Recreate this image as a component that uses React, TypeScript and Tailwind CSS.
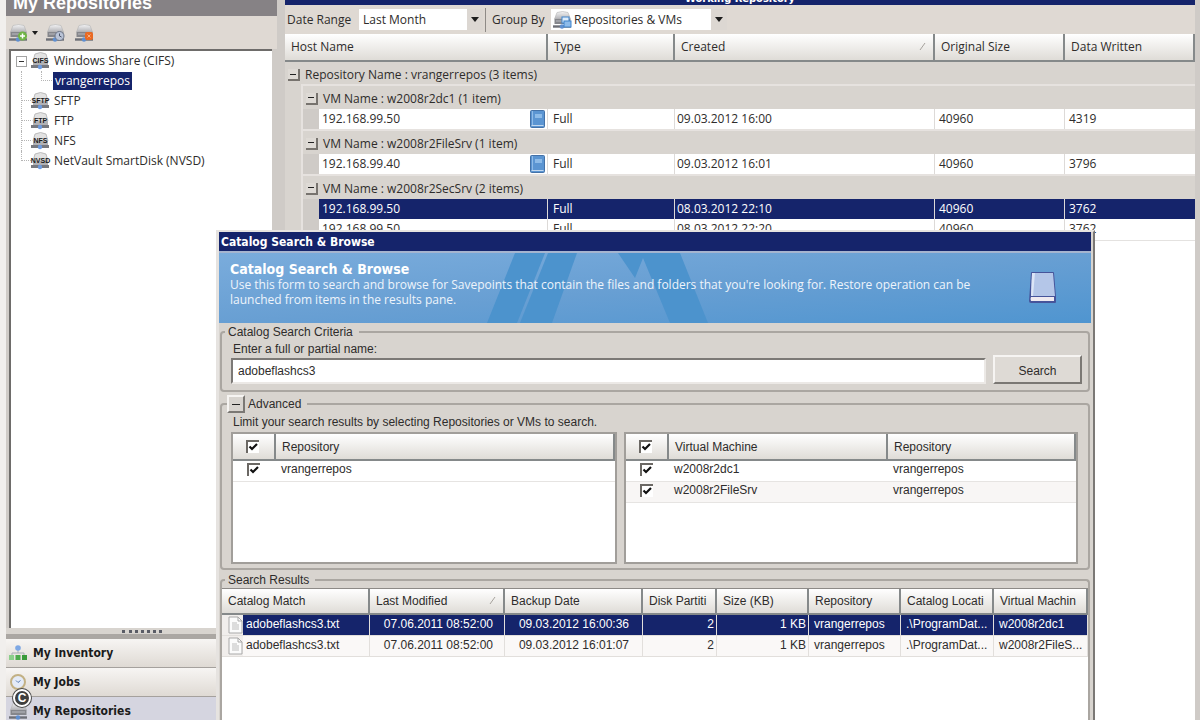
import { Fragment, useState } from "react";
import type { ReactNode } from "react";

/* ─────────────────────────────── data ─── */

const SHARES = [
  { tag: "SFTP", label: "SFTP" },
  { tag: "FTP", label: "FTP" },
  { tag: "NFS", label: "NFS" },
  { tag: "NVSD", label: "NetVault SmartDisk (NVSD)" },
];

const VM_GROUPS = [
  {
    title: "VM Name : w2008r2dc1 (1 item)",
    rows: [{ host: "192.168.99.50", book: true, created: "09.03.2012 16:00", size: "40960", written: "4319" }],
  },
  {
    title: "VM Name : w2008r2FileSrv (1 item)",
    rows: [{ host: "192.168.99.40", book: true, created: "09.03.2012 16:01", size: "40960", written: "3796" }],
  },
  {
    title: "VM Name : w2008r2SecSrv (2 items)",
    rows: [
      { host: "192.168.99.50", selected: true, created: "08.03.2012 22:10", size: "40960", written: "3762" },
      { host: "192.168.99.50", created: "08.03.2012 22:20", size: "40960", written: "3762" },
    ],
  },
];

const RESULTS = [
  { file: "adobeflashcs3.txt", modified: "07.06.2011 08:52:00", backup: "09.03.2012 16:00:36", vm: "w2008r2dc1" },
  { file: "adobeflashcs3.txt", modified: "07.06.2011 08:52:00", backup: "09.03.2012 16:01:07", vm: "w2008r2FileS..." },
];

/* ─────────────────────────────── icons ─── */

const Drive = ({ children }: { children?: ReactNode }) => (
  <svg viewBox="0 0 19 18" className="h-[18px] w-[19px] shrink-0">
    <defs>
      <linearGradient id="drive" x1="0" y1="0" x2="0" y2="1">
        <stop offset="0" stopColor="#f4f4f5" />
        <stop offset="1" stopColor="#b2b2b6" />
      </linearGradient>
    </defs>
    <path d="M4 1.5 Q9.5 -0.5 15 1.5 L17.5 8 H1.5 Z" fill="url(#drive)" stroke="#b4b3b3" strokeWidth="0.6" />
    <path d="M1.5 8 H17.5 V13 H1.5 Z" fill="#85868b" />
    <path d="M3 10 H16" stroke="#b9bac0" />
    <path d="M0 15.5 H18" stroke="#6d6f76" strokeWidth="2.4" />
    <circle cx="9" cy="15.5" r="2.2" fill="#5f8fd0" />
    {children}
  </svg>
);

const AddBadge = () => (
  <g>
    <circle cx="13.5" cy="12" r="4.5" fill="#6fb446" />
    <path d="M13.5 9.5 V14.5 M11 12 H16" stroke="#fff" strokeWidth="1.5" />
  </g>
);

const ClockBadge = () => (
  <g>
    <circle cx="13.5" cy="12" r="4.5" fill="#b9c3d6" stroke="#6d7688" />
    <path d="M13.5 9.5 V12 L15.5 13" stroke="#4d566b" fill="none" />
  </g>
);

const RemoveBadge = () => (
  <g>
    <rect x="10" y="8" width="8" height="8" rx="2" fill="#ea6a23" />
    <path d="M12.5 10.5 L15.5 13.5 M15.5 10.5 L12.5 13.5" stroke="#f9b083" />
  </g>
);

const StackBadge = () => (
  <g>
    <rect x="9" y="6" width="7" height="6" fill="#dcecfb" stroke="#3f83cc" />
    <rect x="11" y="10" width="7" height="6" fill="#8dbbea" stroke="#3f83cc" />
  </g>
);

const ShareIcon = ({ tag }: { tag: string }) => (
  <svg viewBox="0 0 19 18" className="h-[18px] w-[19px] shrink-0 overflow-visible">
    <path d="M4 2 Q9.5 -1 15 2 L17 9 H2 Z" fill="#e2e2e2" stroke="#b0b0b0" strokeWidth="0.8" />
    <path d="M2 9 H17 V13 H2 Z" fill="#b1b1b4" />
    <path d="M0 14.5 H18" stroke="#77797f" strokeWidth="3" />
    <circle cx="9" cy="15" r="2.2" fill="#6d9be0" />
    <text x="9.5" y="10.5" textAnchor="middle" fontSize="7" fontWeight="bold" fontFamily="Liberation Sans, sans-serif" fill="#1a1a1a">
      {tag}
    </text>
  </svg>
);

const SmallBook = () => (
  <svg viewBox="0 0 15 18" className="h-[18px] w-[15px] shrink-0">
    <rect x="0.5" y="0.5" width="14" height="17" rx="1" fill="#5b95d2" stroke="#4472a8" />
    <path d="M2.5 1 V15" stroke="#8fbbe8" />
    <rect x="5" y="4" width="7" height="4" fill="#8dbbe8" />
    <path d="M1.5 15.5 H13.5" stroke="#c3d8ee" />
  </svg>
);

const BigBook = () => (
  <svg viewBox="0 0 30 34" className="h-[34px] w-[30px]">
    <path d="M3 2 Q3 1 4 1 H25 Q26 1 26 2 L28 26 V31 Q28 32 27 32 H3 Q1 32 1 30 Z" fill="#46549a" />
    <path d="M4 2 H25 L27 25 H3 Z" fill="#b4c6e8" />
    <path d="M4 2 H7 L5 25 H3 Z" fill="#dce5f6" />
    <path d="M3 26 H26 V30 H3 Q2 28 3 26 Z" fill="#efeaf0" />
  </svg>
);

const FileIcon = () => (
  <svg viewBox="0 0 15 18" className="h-[18px] w-[15px]">
    <path d="M1 1 H10 L14 5 V17 H1 Z" fill="#fbfbfb" stroke="#a9a9a9" />
    <path d="M10 1 V5 H14" fill="none" stroke="#a9a9a9" />
    <path d="M4 7 H9 M4 9 H11 M4 11 H11 M4 13 H11" stroke="#bdbdbd" />
  </svg>
);

const InventoryIcon = () => (
  <svg viewBox="0 0 18 18" className="h-[18px] w-[18px]">
    <path d="M9 4 V9 M3 12 V9 H15 V12" stroke="#a8adb5" fill="none" />
    <circle cx="9" cy="4" r="2.8" fill="#7ea8e4" />
    <rect x="0" y="11" width="5" height="5" fill="#8bcf8b" />
    <rect x="6.5" y="11" width="5" height="5" fill="#4dab4d" />
    <rect x="13" y="11" width="5" height="5" fill="#3a9b3a" />
  </svg>
);

const JobsIcon = () => (
  <svg viewBox="0 0 18 18" className="h-[18px] w-[18px]">
    <circle cx="9" cy="9" r="7" fill="#e4ebf7" stroke="#c3b184" strokeWidth="2" />
    <path d="M7 7.5 L9 9.5 L11.5 7.5" stroke="#5b7fb5" fill="none" />
  </svg>
);

const Arrow = () => (
  <svg viewBox="0 0 8 5" className="h-[5px] w-2">
    <path d="M0 0 H8 L4 5 Z" fill="#1c1c1c" />
  </svg>
);

const SmallArrow = () => (
  <svg viewBox="0 0 6 4" className="h-1 w-[6px]">
    <path d="M0 0 H6 L3 4 Z" fill="#1c1c1c" />
  </svg>
);

const SortMark = () => (
  <svg viewBox="0 0 8 8" className="h-2 w-2 shrink-0">
    <path d="M1 7 L6 0" stroke="#a6a29c" />
  </svg>
);

/* ─────────────────────────────── small parts ─── */

const Collapse = ({ label }: { label: string }) => (
  <button
    aria-label={label}
    className="flex h-3 w-3 shrink-0 items-center justify-center border-r-2 border-b-2 border-[#77736e] bg-[#dedad5]"
  >
    <span className="h-px w-[6px] bg-[#222]" />
  </button>
);

const Check = ({ label }: { label: string }) => {
  const [on, setOn] = useState(true);
  return (
    <label className="relative block h-[13px] w-[13px]">
      <input
        type="checkbox"
        aria-label={label}
        checked={on}
        onChange={() => setOn(!on)}
        className="block h-[13px] w-[13px] appearance-none border-t-2 border-l-2 border-[#6b6864] bg-white"
      />
      {on && (
        <svg viewBox="0 0 13 13" className="pointer-events-none absolute inset-0">
          <path d="M3.5 6.5 L6 9 L11 4" stroke="#111" strokeWidth="2.2" fill="none" />
        </svg>
      )}
    </label>
  );
};

const Th = ({ children, span, sort, className = "px-[6px]" }: { children: ReactNode; span?: number; sort?: boolean; className?: string }) => (
  <th
    colSpan={span}
    className={`overflow-hidden border-r-2 border-b-2 border-[#85898a] bg-linear-to-b from-white to-[#dfdcd7] text-left font-normal whitespace-nowrap ${className}`}
  >
    <div className="flex items-center justify-between">
      <span>{children}</span>
      {sort && <SortMark />}
    </div>
  </th>
);

/* ─────────────────────────────── sidebar ─── */

const Sidebar = () => (
  <aside className="flex w-[277px] shrink-0 flex-col border-l-[6px] border-[#f1efed]">
    <header className="flex h-4 shrink-0 items-end overflow-hidden bg-[#868285] pb-1 pl-[7px]">
      <h1 className="font-['Liberation_Sans',sans-serif] text-[18px] leading-[18px] font-bold text-white">My Repositories</h1>
    </header>

    <div className="flex h-[33px] shrink-0 items-center bg-[#dfd9d3] pl-[3px]">
      <button aria-label="Add repository" className="flex items-center gap-1">
        <Drive><AddBadge /></Drive>
        <SmallArrow />
      </button>
      <button aria-label="Repository history" className="ml-2">
        <Drive><ClockBadge /></Drive>
      </button>
      <button aria-label="Remove repository" className="ml-[10px]">
        <Drive><RemoveBadge /></Drive>
      </button>
    </div>

    <ul className="mr-[5px] ml-[3px] flex-1 border-t-2 border-l-2 border-[#6e6c6a] bg-white">
      <li>
        <div className="flex h-5 items-center">
          <button
            aria-label="Collapse Windows Share"
            className="ml-[5px] flex h-[11px] w-[11px] items-center justify-center border border-[#a3a3a3] bg-white"
          >
            <span className="h-px w-[5px] bg-[#333]" />
          </button>
          <span className="ml-1"><ShareIcon tag="CIFS" /></span>
          <span className="ml-1">Windows Share (CIFS)</span>
        </div>
        <ul>
          <li className="flex h-5 items-center">
            <span className="ml-[10px] h-5 w-5 border-l border-dotted border-[#b5b5b5]" />
            <span className="mb-[10px] h-[10px] w-[11px] border-b border-l border-dotted border-[#b5b5b5]" />
            <a href="#vrangerrepos" className="ml-[1px] bg-[#15246b] px-[2px] leading-[18px] text-white">vrangerrepos</a>
          </li>
        </ul>
      </li>
      {SHARES.map((s, i) => (
        <li key={s.tag} className="flex h-5 items-start">
          <span className={`ml-[10px] border-l border-dotted border-[#b5b5b5] ${i === SHARES.length - 1 ? "h-[10px]" : "h-5"}`} />
          <span className="h-[10px] w-[9px] border-b border-dotted border-[#b5b5b5]" />
          <span className="flex h-5 items-center gap-1">
            <ShareIcon tag={s.tag} />
            <span>{s.label}</span>
          </span>
        </li>
      ))}
    </ul>

    <div className="flex h-[11px] shrink-0 items-center justify-center border-b-[5px] border-[#aba7a3] bg-[#d8d4cf]">
      <span className="w-10 border-t-[3px] border-dotted border-[#5a5c66]" />
    </div>

    <nav className="h-[81px] shrink-0 overflow-hidden font-bold text-[#1b1b1b]">
      <NavItem label="My Inventory" icon={<InventoryIcon />} />
      <NavItem label="My Jobs" icon={<JobsIcon />} />
      <NavItem label="My Repositories" icon={<Drive />} active />
    </nav>
  </aside>
);

const NavItem = ({ label, icon, active = false }: { label: string; icon: ReactNode; active?: boolean }) => (
  <a
    href="#nav"
    className={`flex h-[29px] items-center border-b border-[#a5a19d] pl-[3px] font-['DejaVu_Sans_Condensed','DejaVu_Sans',sans-serif] ${
      active ? "bg-[#d5d5e0]" : "bg-linear-to-b from-[#f7f5f3] to-[#dfdad4]"
    }`}
  >
    <span className="flex w-6 shrink-0">{icon}</span>
    {label}
  </a>
);

/* ─────────────────────────────── repository grid ─── */

const RepositoryGrid = () => (
  <main className="mr-[5px] ml-2 flex min-w-0 flex-1 flex-col bg-white">
    <header className="flex h-[5px] shrink-0 items-end justify-center overflow-hidden bg-[#15246b]">
      <h2 className="font-['DejaVu_Sans_Condensed','DejaVu_Sans',sans-serif] text-[11px] leading-3 font-bold text-white">
        Working Repository
      </h2>
    </header>

    <div className="flex h-[29px] shrink-0 items-center bg-[#dfd9d3] pl-[2px]">
      <label htmlFor="range" className="w-[72px]">Date Range</label>
      <div className="relative flex h-[21px] w-[124px] items-center bg-white">
        <select id="range" className="h-full w-full appearance-none pl-1">
          <option>Last Month</option>
        </select>
        <span className="pointer-events-none absolute inset-y-0 right-0 flex w-4 items-center justify-center bg-[#dcd7d2]">
          <Arrow />
        </span>
      </div>
      <span className="mx-[2px] h-6 w-px bg-[#8e8a86]" />
      <label htmlFor="group" className="ml-1 w-[59px]">Group By</label>
      <div className="relative flex h-[21px] w-[176px] items-center bg-white pl-[2px]">
        <Drive><StackBadge /></Drive>
        <select id="group" className="h-full w-full appearance-none pl-[2px]">
          <option>Repositories &amp; VMs</option>
        </select>
        <span className="pointer-events-none absolute inset-y-0 right-0 flex w-4 items-center justify-center bg-[#dcd7d2]">
          <Arrow />
        </span>
      </div>
    </div>

    <table className="w-full table-fixed border-separate border-spacing-0">
      <colgroup>
        <col className="w-[18px]" />
        <col className="w-4" />
        <col />
        <col className="w-[127px]" />
        <col className="w-[260px]" />
        <col className="w-[130px]" />
        <col className="w-[130px]" />
      </colgroup>
      <thead>
        <tr className="h-7">
          <Th span={3}>Host Name</Th>
          <Th>Type</Th>
          <Th sort>Created</Th>
          <Th>Original Size</Th>
          <Th>Data Written</Th>
        </tr>
      </thead>
      <tbody>
        <tr className="h-[22px] bg-[#d8d4cf]">
          <td colSpan={7} className="pt-1 pl-[3px]">
            <div className="flex items-center gap-[5px]">
              <Collapse label="Collapse repository" />
              Repository Name : vrangerrepos (3 items)
            </div>
          </td>
        </tr>
        {VM_GROUPS.map((g) => (
          <Fragment key={g.title}>
            <tr className="h-[25px] bg-[#d8d4cf]">
              <td className="border-r-2 border-[#e6e2df]" />
              <td colSpan={6} className="border-t-2 border-[#e6e2df] pt-[2px] pl-[3px]">
                <div className="flex items-center gap-[5px]">
                  <Collapse label="Collapse VM" />
                  {g.title}
                </div>
              </td>
            </tr>
            {g.rows.map((r) => (
              <tr key={r.created} className={`h-5 ${r.selected ? "bg-[#15246b] text-white" : "bg-white"}`}>
                <td className="border-r-2 border-[#e6e2df] bg-[#d8d4cf]" />
                <td className="bg-[#cfcbc7]" />
                <td className="border-r border-[#dddad8] pl-[3px]">
                  <div className="flex items-center justify-between pr-[2px]">
                    {r.host}
                    {r.book && <SmallBook />}
                  </div>
                </td>
                <td className="border-r border-[#dddad8] pl-[5px]">Full</td>
                <td className="border-r border-[#dddad8] pl-[2px]">{r.created}</td>
                <td className="border-r border-[#dddad8] pl-1">{r.size}</td>
                <td className="pl-1">{r.written}</td>
              </tr>
            ))}
          </Fragment>
        ))}
        <tr className="h-[2px]">
          <td colSpan={7} className="border-b border-[#e4e2e0]" />
        </tr>
      </tbody>
    </table>
  </main>
);

/* ─────────────────────────────── dialog ─── */

const Banner = () => (
  <div className="relative h-[72px] shrink-0 overflow-hidden border-t-2 border-[#a5b4cf] bg-linear-to-br from-[#7aacdc] via-[#689fd3] to-[#4f95d0]">
    <svg viewBox="0 0 230 70" className="absolute top-0 left-[268px] h-[70px] w-[230px]">
      <path d="M28 0 H58 L30 70 H0 Z" fill="#4c93cd" />
      <path d="M61 0 H90 L65 70 H33 Z" fill="#4c93cd" />
      <path d="M131 0 H193 L221 70 H183 L156 5 L148 25 Z" fill="#4c93cd" />
    </svg>
    <div className="relative flex h-full items-start justify-between pt-2 pr-[33px] pl-[11px] text-white">
      <div className="max-w-[760px]">
        <h3 className="font-['DejaVu_Sans_Condensed','DejaVu_Sans',sans-serif] text-[14px] leading-4 font-bold">Catalog Search &amp; Browse</h3>
        <p className="leading-[15px] text-[#eef4fb]">
          Use this form to search and browse for Savepoints that contain the files and folders that you're looking for. Restore operation can be
          <br />
          launched from items in the results pane.
        </p>
      </div>
      <span className="mt-[10px]"><BigBook /></span>
    </div>
  </div>
);

const CatalogDialog = () => {
  const [name, setName] = useState("adobeflashcs3");

  return (
    <section
      role="dialog"
      aria-label="Catalog Search & Browse"
      className="absolute top-[230px] right-[105px] bottom-0 left-[216px] flex flex-col overflow-hidden border-t-2 border-r-2 border-l-[3px] border-t-[#e6e3e0] border-r-[#7b7875] border-l-[#e6e3e0] bg-[#d8d4cf] pr-[2px]"
    >
      <header className="flex h-[19px] shrink-0 items-center bg-[#15246b] pl-[2px]">
        <h2 className="font-['DejaVu_Sans_Condensed','DejaVu_Sans',sans-serif] text-[12px] font-bold text-white">Catalog Search &amp; Browse</h2>
      </header>
      <Banner />

      <div className="mx-px flex flex-1 flex-col pt-px font-['Liberation_Sans',sans-serif] text-[12px] leading-4">
        <fieldset className="h-[68px] min-w-0 shrink-0 rounded-sm border-2 border-[#aaa6a1]">
          <legend className="ml-[3px] pr-[6px] pl-[3px]">Catalog Search Criteria</legend>
          <div className="flex items-end gap-[7px] pr-[6px] pl-[9px]">
            <div className="flex-1">
              <label htmlFor="name" className="block pl-[2px] leading-[18px]">Enter a full or partial name:</label>
              <input
                id="name"
                value={name}
                onChange={(e) => setName(e.target.value)}
                className="block h-[26px] w-full border-2 border-t-[#7c7976] border-r-[#ece9e6] border-b-[#ece9e6] border-l-[#7c7976] bg-white pl-[5px]"
              />
            </div>
            <button className="h-[29px] w-[89px] border-2 border-t-[#f6f4f2] border-r-[#7b7874] border-b-[#7b7874] border-l-[#f6f4f2] bg-[#dedad5] pt-[3px]">
              Search
            </button>
          </div>
        </fieldset>

        <fieldset className="mt-[3px] h-[175px] min-w-0 shrink-0 rounded-sm border-2 border-[#aaa6a1]">
          <legend className="ml-[5px] flex h-[18px] items-center gap-[3px] pr-[6px]">
            <button
              aria-label="Hide advanced options"
              className="flex h-[18px] w-[18px] items-center justify-center border-2 border-t-[#f6f4f2] border-r-[#7b7874] border-b-[#7b7874] border-l-[#f6f4f2]"
            >
              <span className="h-px w-2 bg-[#222]" />
            </button>
            Advanced
          </legend>
          <div className="pr-[10px] pl-[9px]">
            <p className="pl-[2px] leading-[19px]">Limit your search results by selecting Repositories or VMs to search.</p>
            <div className="grid h-[132px] grid-cols-[386fr_454fr] gap-[7px]">
              <div className="border-2 border-[#a19e9a] bg-white">
                <table className="w-full table-fixed border-separate border-spacing-0">
                  <colgroup>
                    <col className="w-[43px]" />
                    <col />
                  </colgroup>
                  <thead>
                    <tr className="h-[27px]">
                      <Th className="pl-[13px]"><Check label="All repositories" /></Th>
                      <Th>Repository</Th>
                    </tr>
                  </thead>
                  <tbody>
                    <tr className="h-[21px]">
                      <td className="border-b border-[#e6e4e2] pb-1 pl-[14px]"><Check label="vrangerrepos" /></td>
                      <td className="border-b border-[#e6e4e2] pb-1 pl-[5px]">vrangerrepos</td>
                    </tr>
                  </tbody>
                </table>
              </div>
              <div className="border-2 border-[#a19e9a] bg-white">
                <table className="w-full table-fixed border-separate border-spacing-0">
                  <colgroup>
                    <col className="w-[43px]" />
                    <col />
                    <col className="w-[188px]" />
                  </colgroup>
                  <thead>
                    <tr className="h-[27px]">
                      <Th className="pl-[13px]"><Check label="All virtual machines" /></Th>
                      <Th>Virtual Machine</Th>
                      <Th>Repository</Th>
                    </tr>
                  </thead>
                  <tbody>
                    {["w2008r2dc1", "w2008r2FileSrv"].map((vm) => (
                      <tr key={vm} className="h-[21px] even:bg-[#f8f6f5]">
                        <td className="border-b border-[#e6e4e2] pb-1 pl-[14px]"><Check label={vm} /></td>
                        <td className="border-b border-[#e6e4e2] pb-1 pl-[5px]">{vm}</td>
                        <td className="border-b border-[#e6e4e2] pb-1 pl-[5px]">vrangerrepos</td>
                      </tr>
                    ))}
                  </tbody>
                </table>
              </div>
            </div>
          </div>
        </fieldset>

        <fieldset className="mt-[2px] min-w-0 flex-1 rounded-t-sm border-2 border-b-0 border-[#aaa6a1]">
          <legend className="ml-[3px] pr-[6px] pl-[3px]">Search Results</legend>
          <div className="h-full border-t border-[#8d8a87] bg-white">
            <table className="w-full table-fixed border-separate border-spacing-0">
              <colgroup>
                <col className="w-[148px]" />
                <col className="w-[135px]" />
                <col className="w-[138px]" />
                <col className="w-[74px]" />
                <col className="w-[92px]" />
                <col className="w-[92px]" />
                <col className="w-[93px]" />
                <col />
              </colgroup>
              <thead>
                <tr className="h-[26px]">
                  <Th>Catalog Match</Th>
                  <Th sort>Last Modified</Th>
                  <Th>Backup Date</Th>
                  <Th>Disk Partiti</Th>
                  <Th>Size (KB)</Th>
                  <Th>Repository</Th>
                  <Th>Catalog Locati</Th>
                  <Th>Virtual Machin</Th>
                </tr>
              </thead>
              <tbody>
                {RESULTS.map((r, i) => (
                  <tr
                    key={r.backup}
                    className={`h-[21px] whitespace-nowrap *:border-r *:border-b *:border-[#e2dfdc] *:pb-[3px] ${
                      i === 0 ? "bg-[#15246b] text-white" : "bg-[#faf8f7]"
                    }`}
                  >
                    <td>
                      <div className="flex h-[17px] items-center gap-[3px]">
                        <span className="mt-[3px] flex h-5 w-[21px] shrink-0 items-center justify-end bg-[#f1eeec]"><FileIcon /></span>
                        {r.file}
                      </div>
                    </td>
                    <td className="pr-[11px] text-right">{r.modified}</td>
                    <td className="pr-[13px] text-right">{r.backup}</td>
                    <td className="pr-[2px] text-right">2</td>
                    <td className="pr-[2px] text-right">1 KB</td>
                    <td className="pl-[5px]">vrangerrepos</td>
                    <td className="overflow-hidden pl-[5px]">.\ProgramDat...</td>
                    <td className="overflow-hidden pl-[5px]">{r.vm}</td>
                  </tr>
                ))}
              </tbody>
            </table>
          </div>
        </fieldset>
      </div>
    </section>
  );
};

/* ─────────────────────────────── page ─── */

const App = () => (
  <div className="relative flex h-screen overflow-hidden bg-[#cfcbc7] font-['Open_Sans',sans-serif] text-[12px] leading-4 text-[#2e2c2b]">
    <Sidebar />
    <RepositoryGrid />
    <CatalogDialog />
    <span className="absolute bottom-[13px] left-[13px] flex h-[18px] w-[18px] items-center justify-center rounded-full border-2 border-white bg-[#3f3f3f] font-['Liberation_Sans',sans-serif] text-[12px] leading-none font-bold text-white ring-1 ring-[#4b4b4b]">
      C
    </span>
  </div>
);

export default App;
